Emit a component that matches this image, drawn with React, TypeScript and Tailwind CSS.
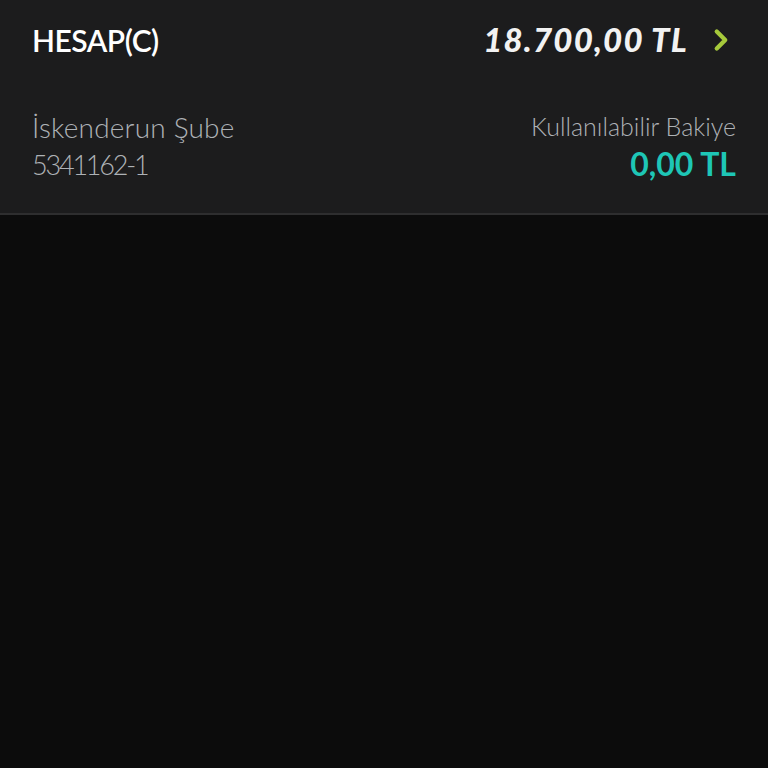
import { ChevronRight } from "lucide-react";

export default function App() {
  return (
    <main
      className="min-h-screen w-full bg-[#0c0c0c]"
      style={{ fontFamily: "Lato, 'Noto Sans', sans-serif" }}
    >
      <section className="bg-[#1c1c1d] border-b-2 border-[#2e2e2f] h-[215px] px-8">
        <div className="flex items-center justify-between h-[80px]">
          <h1 className="text-white text-[30px] font-semibold tracking-[-0.5px]">HESAP(C)</h1>
          <div className="flex items-center">
            <span className="text-[#f2f2f2] text-[33px] font-black italic tracking-[1.2px]">
              18.700,00 TL
            </span>
            <ChevronRight className="ml-4 -mr-[2px] w-[34px] h-[34px] text-[#a6c93b]" strokeWidth={3} />
          </div>
        </div>
        <div className="flex justify-between mt-[28px]">
          <div className="text-[#aeb2b6] font-light leading-[38px]">
            <p className="text-[28px] tracking-[0.2px]">İskenderun Şube</p>
            <p className="text-[27px] tracking-[-2.2px]">5341162-1</p>
          </div>
          <div className="text-right">
            <p className="text-[#aeb2b6] text-[25px] font-light leading-[32px] mt-[2px]">
              Kullanılabilir Bakiye
            </p>
            <p className="text-[#1ec6b6] text-[32px] font-bold leading-[40px] mt-[2px]">0,00 TL</p>
          </div>
        </div>
      </section>
    </main>
  );
}
